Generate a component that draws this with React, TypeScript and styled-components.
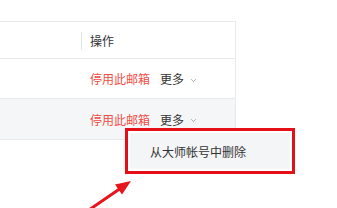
import styled, { createGlobalStyle } from 'styled-components';
import { ChevronDown } from 'lucide-react';

const GlobalStyle = createGlobalStyle`
  body {
    margin: 0;
    background: #ffffff;
    font-family: "Noto Sans CJK SC", "Noto Sans", sans-serif;
    font-size: 12px;
    color: #333333;
  }
`;

const Page = styled.div`
  position: relative;
  width: 337px;
  height: 208px;
  overflow: hidden;
  padding-top: 21px;
  box-sizing: border-box;
`;

const Table = styled.div`
  width: 237px;
  margin-left: -1px;
  border: 1px solid #e8eaec;
  border-bottom: none;
  box-sizing: border-box;
`;

const Row = styled.div<{ $height: number; $hover?: boolean }>`
  display: grid;
  grid-template-columns: 81px 1fr;
  height: ${(p) => p.$height}px;
  border-bottom: 1px solid #e8eaec;
  background: ${(p) => (p.$hover ? '#f5f6f8' : '#ffffff')};
`;

const Cell = styled.div`
  display: flex;
  align-items: center;
  padding-left: 9px;
`;

const HeadCell = styled(Cell)`
  position: relative;
  color: #333333;

  &::before {
    content: '';
    position: absolute;
    left: 0;
    top: 10px;
    width: 1px;
    height: 18px;
    background: #e3e5e8;
  }
`;

const DangerLink = styled.span`
  color: #ef4c44;
  margin-right: 10px;
`;

const More = styled.span`
  display: inline-flex;
  align-items: center;
  gap: 5px;
  color: #333333;

  svg {
    margin-top: 3px;
  }
`;

const Dropdown = styled.div`
  position: absolute;
  left: 125px;
  top: 128px;
  width: 170px;
  height: 46px;
  box-sizing: border-box;
  border: 3.5px solid #e50f17;
  background: #ffffff;
  padding: 2px;
`;

const MenuItem = styled.div`
  height: 100%;
  display: flex;
  align-items: center;
  padding-left: 20px;
  background: #f4f5f7;
  color: #333333;
`;

const Arrow = styled.svg`
  position: absolute;
  left: 0;
  top: 0;
`;

const App = () => {
  return (
    <Page>
      <GlobalStyle />
      <Table>
        <Row $height={36}>
          <div />
          <HeadCell>操作</HeadCell>
        </Row>
        <Row $height={39}>
          <div />
          <Cell>
            <DangerLink>停用此邮箱</DangerLink>
            <More>
              更多
              <ChevronDown size={9} color="#777" strokeWidth={1.6} />
            </More>
          </Cell>
        </Row>
        <Row $height={40} $hover>
          <div />
          <Cell>
            <DangerLink>停用此邮箱</DangerLink>
            <More>
              更多
              <ChevronDown size={9} color="#777" strokeWidth={1.6} />
            </More>
          </Cell>
        </Row>
      </Table>
      <Dropdown>
        <MenuItem>从大师帐号中删除</MenuItem>
      </Dropdown>
      <Arrow width="337" height="208" viewBox="0 0 337 208">
        <line x1="86" y1="212" x2="121" y2="188" stroke="#e8141b" strokeWidth="3" />
        <polygon points="131,181 122,194.5 115,184.5" fill="#e8141b" />
      </Arrow>
    </Page>
  );
};

export default App;
